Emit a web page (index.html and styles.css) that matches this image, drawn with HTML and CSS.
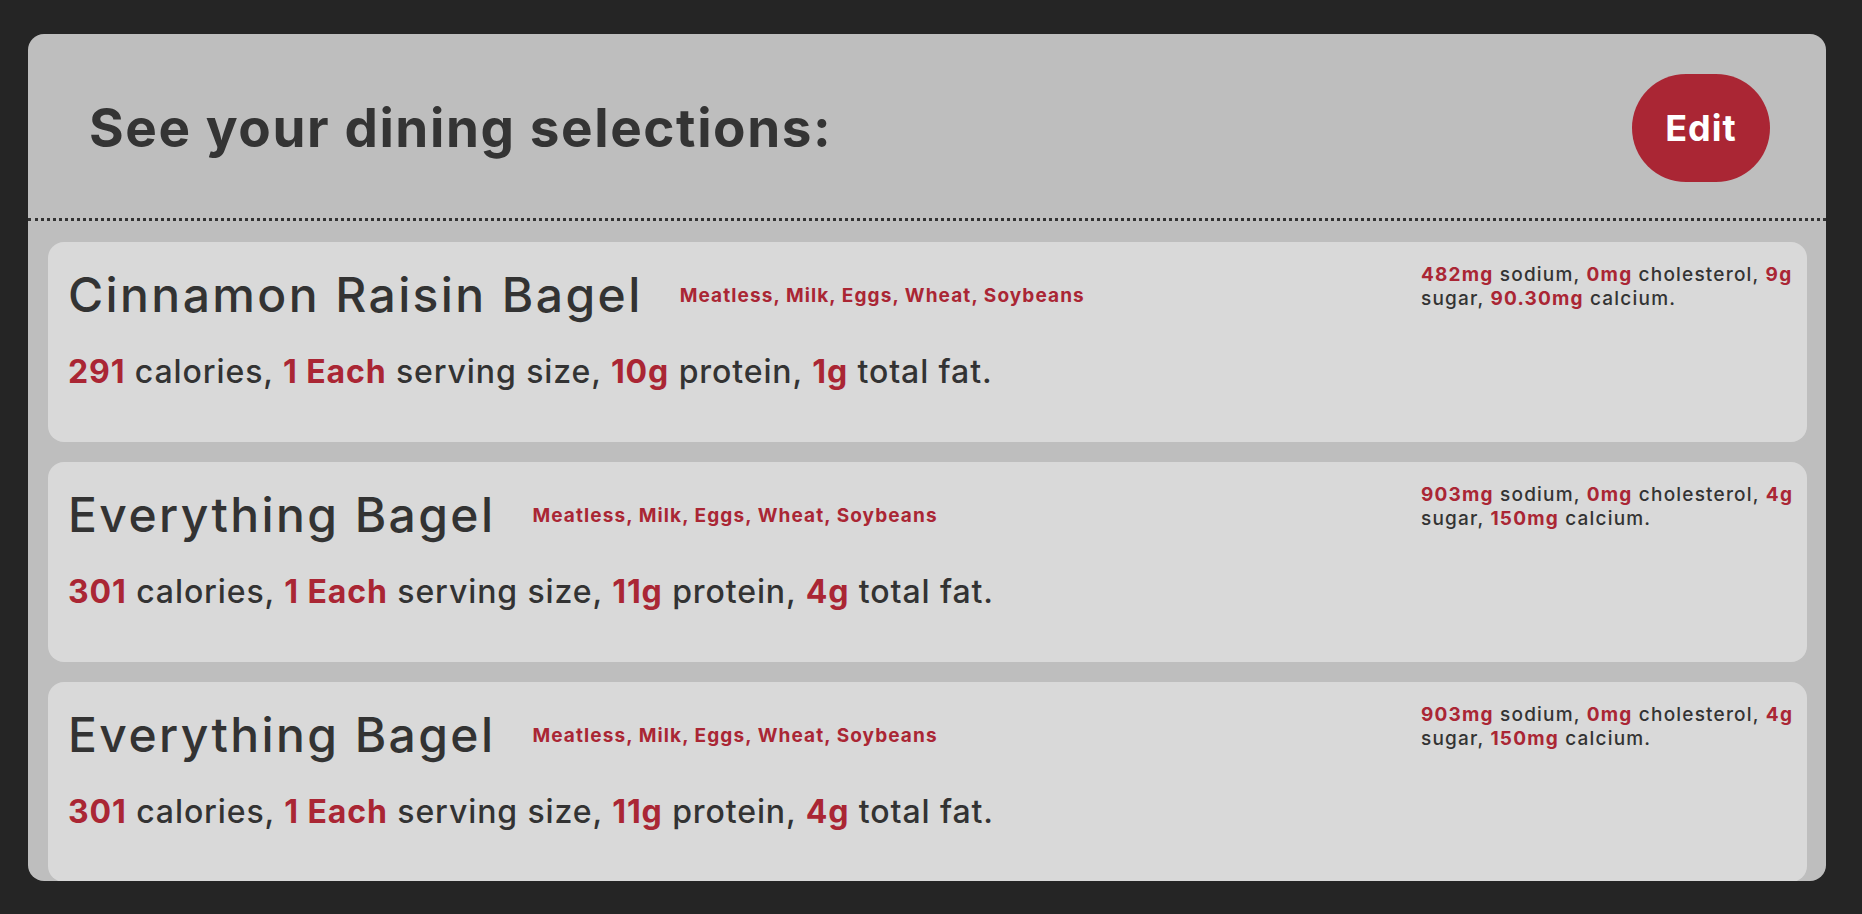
FILE: index.html
```html
<!DOCTYPE html>
<html lang="en">
<head>
  <meta charset="UTF-8">
  <meta name="viewport" content="width=device-width, initial-scale=1.0">
  <title>Dining Selections</title>
  <link rel="stylesheet" href="styles.css">
</head>
<body>
  <div class="panel">
    <header class="panel-head">
      <h1>See your dining selections:</h1>
      <button class="edit-btn">Edit</button>
    </header>
    <div class="selections">
      <div class="item">
        <div class="item-main">
          <div class="item-title">
            <h2>Cinnamon Raisin Bagel</h2>
            <span class="tags">Meatless, Milk, Eggs, Wheat, Soybeans</span>
          </div>
          <p class="facts"><b>291</b> calories, <b>1 Each</b> serving size, <b>10g</b> protein, <b>1g</b> total fat.</p>
        </div>
        <p class="extra"><b>482mg</b> sodium, <b>0mg</b> cholesterol, <b>9g</b> sugar, <b>90.30mg</b> calcium.</p>
      </div>
      <div class="item">
        <div class="item-main">
          <div class="item-title">
            <h2>Everything Bagel</h2>
            <span class="tags">Meatless, Milk, Eggs, Wheat, Soybeans</span>
          </div>
          <p class="facts"><b>301</b> calories, <b>1 Each</b> serving size, <b>11g</b> protein, <b>4g</b> total fat.</p>
        </div>
        <p class="extra"><b>903mg</b> sodium, <b>0mg</b> cholesterol, <b>4g</b> sugar, <b>150mg</b> calcium.</p>
      </div>
      <div class="item">
        <div class="item-main">
          <div class="item-title">
            <h2>Everything Bagel</h2>
            <span class="tags">Meatless, Milk, Eggs, Wheat, Soybeans</span>
          </div>
          <p class="facts"><b>301</b> calories, <b>1 Each</b> serving size, <b>11g</b> protein, <b>4g</b> total fat.</p>
        </div>
        <p class="extra"><b>903mg</b> sodium, <b>0mg</b> cholesterol, <b>4g</b> sugar, <b>150mg</b> calcium.</p>
      </div>
    </div>
  </div>
</body>
</html>
```

FILE: styles.css
```css
body {
  margin: 0;
  padding: 34px 36px 0 28px;
  background-color: #252525;
  font-family: Inter, "Open Sans", sans-serif;
  color: #333333;
}
.panel {
  height: 847px;
  background-color: #bebebe;
  border-radius: 16px;
  overflow: hidden;
}
.panel-head {
  display: flex;
  align-items: center;
  justify-content: space-between;
  padding: 40px 56px 36px 61px;
  border-bottom: 3px dotted #333333;
}
.panel-head h1 {
  margin: 0;
  font-size: 53px;
  font-weight: 700;
  letter-spacing: 1.6px;
  color: #343434;
}
.edit-btn {
  width: 138px;
  height: 108px;
  border: none;
  border-radius: 54px;
  background-color: #aa2634;
  color: white;
  font-family: inherit;
  font-size: 36px;
  font-weight: 700;
  letter-spacing: 1px;
  cursor: pointer;
}
.selections {
  padding: 21px 19px 0 20px;
}
.item {
  display: flex;
  background-color: #d9d9d9;
  border-radius: 16px;
  padding: 21px 10px 20px 20px;
  margin-bottom: 20px;
}
.item-main {
  flex: 1;
}
.item-title {
  display: flex;
  align-items: center;
  gap: 37px;
  padding-top: 3px;
}
.item-title h2 {
  margin: 0;
  font-size: 48px;
  font-weight: 500;
  letter-spacing: 2.4px;
  line-height: 58px;
}
.tags {
  font-size: 19px;
  font-weight: 700;
  letter-spacing: 1.1px;
  color: #aa2634;
}
.facts {
  margin: 28px 0 31px;
  font-size: 32px;
  font-weight: 500;
  letter-spacing: 0.9px;
  line-height: 39px;
}
.extra {
  width: 376px;
  margin: 0;
  font-size: 19px;
  font-weight: 500;
  letter-spacing: 1.2px;
  line-height: 24px;
}
b {
  color: #aa2634;
  font-weight: 700;
}
```
